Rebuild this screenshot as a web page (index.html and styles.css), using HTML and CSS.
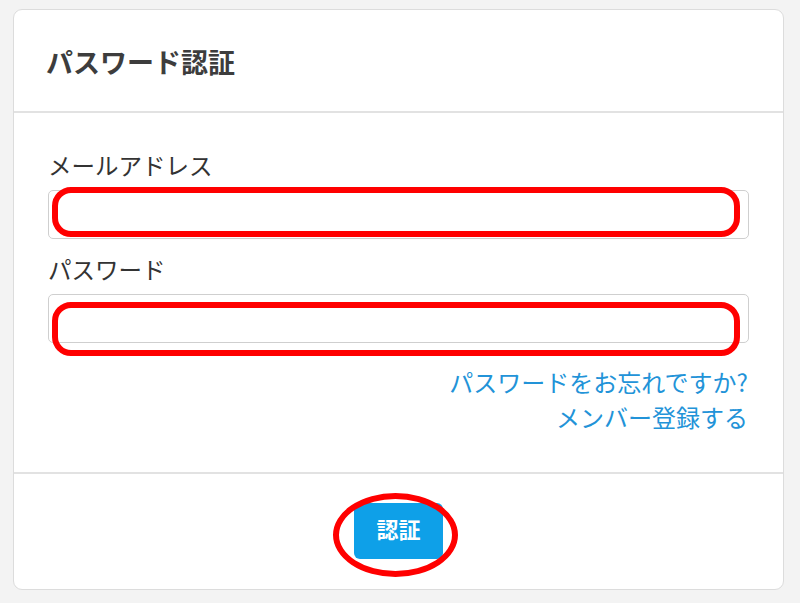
FILE: index.html
```html
<!DOCTYPE html>
<html lang="ja">
<head>
<meta charset="utf-8">
<title>パスワード認証</title>
<link rel="stylesheet" href="styles.css">
</head>
<body>
<div class="card">
  <div class="card-header">パスワード認証</div>
  <div class="card-body">
    <label class="label">メールアドレス</label>
    <div class="field">
      <input class="input" type="text">
      <span class="mark mark-1"></span>
    </div>
    <label class="label label-2">パスワード</label>
    <div class="field">
      <input class="input" type="password">
      <span class="mark mark-2"></span>
    </div>
    <div class="links">
      <a href="#" class="link">パスワードをお忘れですか?</a>
      <a href="#" class="link">メンバー登録する</a>
    </div>
  </div>
  <div class="card-footer">
    <div class="btn-wrap">
      <button class="btn">認証</button>
      <span class="ring"></span>
    </div>
  </div>
</div>
</body>
</html>
```

FILE: styles.css
```css
html, body {
  margin: 0;
  padding: 0;
}
body {
  background: #f3f3f3;
  padding: 9px 16px 13px 13px;
  font-family: "Noto Sans CJK JP", "Noto Sans", sans-serif;
  color: #333;
}
.card {
  background: #fff;
  border: 1px solid #dcdcdc;
  border-radius: 9px;
  height: 581px;
  box-sizing: border-box;
  display: flex;
  flex-direction: column;
}
.card-header {
  height: 103px;
  border-bottom: 2px solid #e2e2e2;
  box-sizing: border-box;
  padding-left: 32px;
  display: flex;
  align-items: center;
  font-size: 27px;
  font-weight: bold;
  color: #3d3d3d;
  padding-top: 1px;
}
.card-body {
  padding: 35px 34px 0 34px;
  height: 361px;
  box-sizing: border-box;
  border-bottom: 2px solid #e2e2e2;
  display: flex;
  flex-direction: column;
}
.label {
  display: block;
  font-size: 23.5px;
  line-height: 34px;
  color: #333;
}
.label-2 {
  margin-top: 13px;
}
.field {
  position: relative;
  margin-top: 8px;
}
.input {
  display: block;
  width: 701px;
  height: 49px;
  box-sizing: border-box;
  border: 1px solid #cfcfcf;
  border-radius: 5px;
  background: #fff;
  margin: 0;
  padding: 0 10px;
  font-size: 20px;
}
.mark {
  position: absolute;
  box-sizing: border-box;
  border: 6px solid #ff0000;
  border-radius: 19px;
  pointer-events: none;
}
.mark-1 {
  left: 4px;
  top: -3px;
  width: 688px;
  height: 50px;
}
.mark-2 {
  left: 4px;
  top: 8px;
  width: 688px;
  height: 54px;
}
.links {
  margin-top: 21px;
  display: flex;
  flex-direction: column;
  align-items: flex-end;
  padding-right: 1px;
}
.link {
  font-size: 24px;
  line-height: 35px;
  color: #2293d8;
  text-decoration: none;
}
.card-footer {
  flex: 1;
  display: flex;
  justify-content: center;
  align-items: flex-start;
  padding-top: 29px;
}
.btn-wrap {
  position: relative;
}
.btn {
  display: block;
  width: 89px;
  height: 56px;
  border: none;
  border-radius: 6px;
  background: #0ea0e8;
  color: #fff;
  font-family: "Noto Sans CJK JP", "Noto Sans", sans-serif;
  font-size: 22px;
  font-weight: bold;
  padding: 0 0 6px 0;
}
.ring {
  position: absolute;
  left: -21px;
  top: -10px;
  width: 125px;
  height: 84px;
  box-sizing: border-box;
  border: 6px solid #ff0000;
  border-radius: 50%;
  pointer-events: none;
}
```
